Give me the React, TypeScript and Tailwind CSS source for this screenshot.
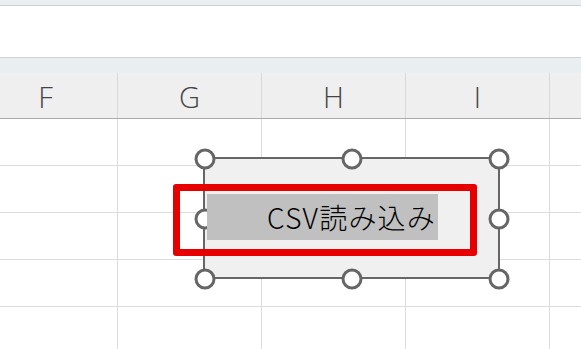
import React from 'react';

const columns = ['F', 'G', 'H', 'I', ''];
const rows = [0, 1, 2, 3, 4];

// 図形内での選択ハンドルの位置（図形の左上基準）
const handles = [
  [2, 2],
  [149, 2],
  [296, 2],
  [2, 62],
  [296, 62],
  [2, 122],
  [149, 122],
  [296, 122],
];

export default function App() {
  return (
    <div className="relative w-[581px] h-[349px] overflow-hidden bg-white font-['Noto_Sans','Liberation_Sans',sans-serif]">
      {/* リボン下の帯と数式バー */}
      <div className="h-[5px] bg-[#e9eff1]" />
      <div className="h-px bg-[#cfd3d5]" />
      <div className="h-[51px] bg-white" />
      <div className="h-px bg-[#cfd3d5]" />
      <div className="h-[15px] bg-[#e9eff1]" />

      {/* 列見出し */}
      <div className="flex ml-[-26px] h-[46px] bg-[#efefef] border-b border-[#ababab]">
        {columns.map((c, i) => (
          <div
            key={i}
            className="w-[144px] shrink-0 border-r border-[#d9d9d9] flex items-center justify-center pt-[2px] text-[29px] font-light text-[#444] font-['Open_Sans','Liberation_Sans',sans-serif]"
          >
            {c}
          </div>
        ))}
      </div>

      {/* セル */}
      {rows.map((r) => (
        <div key={r} className="flex ml-[-26px] h-[47px] border-b border-[#dcdcdc]">
          {columns.map((_, i) => (
            <div key={i} className="w-[144px] shrink-0 border-r border-[#dcdcdc]" />
          ))}
        </div>
      ))}

      {/* 図形（選択中） */}
      <div className="absolute left-[203px] top-[157px] w-[297px] h-[122px]">
        <div className="w-full h-full border-2 border-[#666] bg-[#f0f0f0]" />
        {handles.map(([x, y], i) => (
          <div
            key={i}
            className="absolute w-[21px] h-[21px] rounded-full border-[3px] border-[#666] bg-white -translate-x-1/2 -translate-y-1/2"
            style={{ left: x, top: y }}
          />
        ))}
        <div className="absolute left-[4px] top-[37px] w-[231px] h-[46px] bg-[#c0c0c0] flex items-center justify-end pr-[2px]">
          <span className="text-[28px] leading-none tracking-[1.2px] text-black font-['Noto_Sans_CJK_JP',sans-serif] font-light">
            CSV読み込み
          </span>
        </div>
      </div>

      {/* 強調枠 */}
      <div className="absolute left-[173px] top-[184px] w-[304px] h-[72px] border-[7px] border-[#e60000] rounded-[3px]" />
    </div>
  );
}
